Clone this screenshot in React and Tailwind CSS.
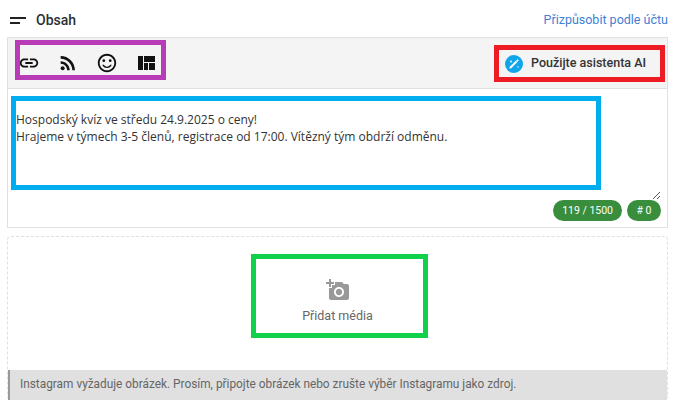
import { MdLink, MdRssFeed, MdOutlineSentimentSatisfied, MdAddAPhoto } from "react-icons/md";

const roboto = "font-['Roboto',sans-serif]";

function HeaderIcon() {
  return (
    <svg width="16" height="7" viewBox="0 0 16 7" className="text-[#222]">
      <rect x="0" y="0" width="16" height="2" fill="currentColor" />
      <rect x="0" y="5" width="10" height="2" fill="currentColor" />
    </svg>
  );
}

function LayoutIcon() {
  return (
    <svg width="17" height="14" viewBox="0 0 17 14" className="ml-[3px]">
      <path d="M0 0h5v14H0zM6 0h11v6H6zM6 7h4v7H6zM11 7h6v7h-6z" fill="#111" />
    </svg>
  );
}

function AiIcon() {
  return (
    <svg width="18" height="18" viewBox="0 0 18 18">
      <circle cx="9" cy="9" r="9" fill="#12a5ea" />
      <path d="M5.500 12.500 L11 7" stroke="#fff" strokeWidth="2" strokeLinecap="round" />
      <path d="M12.500 3.800l.5 1.200 1.200.5-1.200.5-.5 1.200-.5-1.200-1.200-.5 1.200-.5z" fill="#fff" />
      <circle cx="6" cy="6.500" r="0.900" fill="#fff" />
      <circle cx="13" cy="12" r="0.700" fill="#fff" />
    </svg>
  );
}

export default function App() {
  return (
    <div className={`relative h-[412px] w-[683px] overflow-hidden bg-white pl-[7px] pr-[15px] ${roboto}`}>
      <div className="flex h-[37px] items-center justify-between pt-[3px]">
        <div className="flex items-center gap-[10px] pl-[3px]">
          <HeaderIcon />
          <span className="text-[14px] font-medium text-[#2b2f33]">Obsah</span>
        </div>
        <a className="text-[12.5px] text-[#3f7fd6]">Přizpůsobit podle účtu</a>
      </div>

      <div className="border border-[#e0e0e0]">
        <div className="flex h-[51px] items-center justify-between border-b border-[#e0e0e0] bg-[#f4f4f4] pl-[10px] pr-[14px]">
          <div className="flex items-center gap-[17px] text-[#111]">
            <MdLink size={22} />
            <MdRssFeed size={22} />
            <MdOutlineSentimentSatisfied size={22} />
            <LayoutIcon />
          </div>
          <button className="flex items-center gap-[8px] pr-[7px] pt-[1px] text-[12.5px] font-medium text-[#333]">
            <AiIcon />
            Použijte asistenta AI
          </button>
        </div>
        <div className="relative h-[138px] bg-white">
          <div className="pl-[8px] pt-[22px] font-['Open_Sans',sans-serif] text-[12px] leading-[17px] text-[#333]">
            <p>Hospodský kvíz ve středu 24.9.2025 o ceny!</p>
            <p>Hrajeme v týmech 3-5 členů, registrace od 17:00. Vítězný tým obdrží odměnu.</p>
          </div>
          <svg width="9" height="9" viewBox="0 0 9 9" className="absolute bottom-[27px] right-[6px]">
            <path d="M1 8L8 1M5 8L8 5" stroke="#555" strokeWidth="1" />
          </svg>
          <div className="absolute bottom-[6px] right-[6px] flex gap-[5px] text-[10.5px] text-white">
            <span className="flex h-[21px] items-center rounded-full bg-[#388e3c] px-[9px]">119 / 1500</span>
            <span className="flex h-[21px] items-center rounded-full bg-[#388e3c] px-[9.5px]"># 0</span>
          </div>
        </div>
      </div>

      <div className="mt-[8px] h-[164px] rounded-[4px] border border-dashed border-[#e0e0e0]">
        <div className="flex h-[133px] flex-col items-center pt-[41px]">
          <MdAddAPhoto size={24} className="text-[#999]" />
          <span className="mt-[5px] text-[12.5px] text-[#666]">Přidat média</span>
        </div>
        <div className="flex h-[30px] items-center border-l-[2px] border-[#999] bg-[#e0e0e0] pl-[10px] text-[11.85px] text-[#666]">
          Instagram vyžaduje obrázek. Prosím, připojte obrázek nebo zrušte výběr Instagramu jako zdroj.
        </div>
      </div>

      <div className="absolute left-[15px] top-[40px] h-[40px] w-[151px] border-[5px] border-[#b83bb8]" />
      <div className="absolute left-[494px] top-[45px] h-[37px] w-[171px] border-[5px] border-[#ed1c24]" />
      <div className="absolute left-[11px] top-[96px] h-[94px] w-[590px] border-[5px] border-[#00aeef]" />
      <div className="absolute left-[251px] top-[254px] h-[84px] w-[177px] border-[5px] border-[#10d24a]" />
    </div>
  );
}
